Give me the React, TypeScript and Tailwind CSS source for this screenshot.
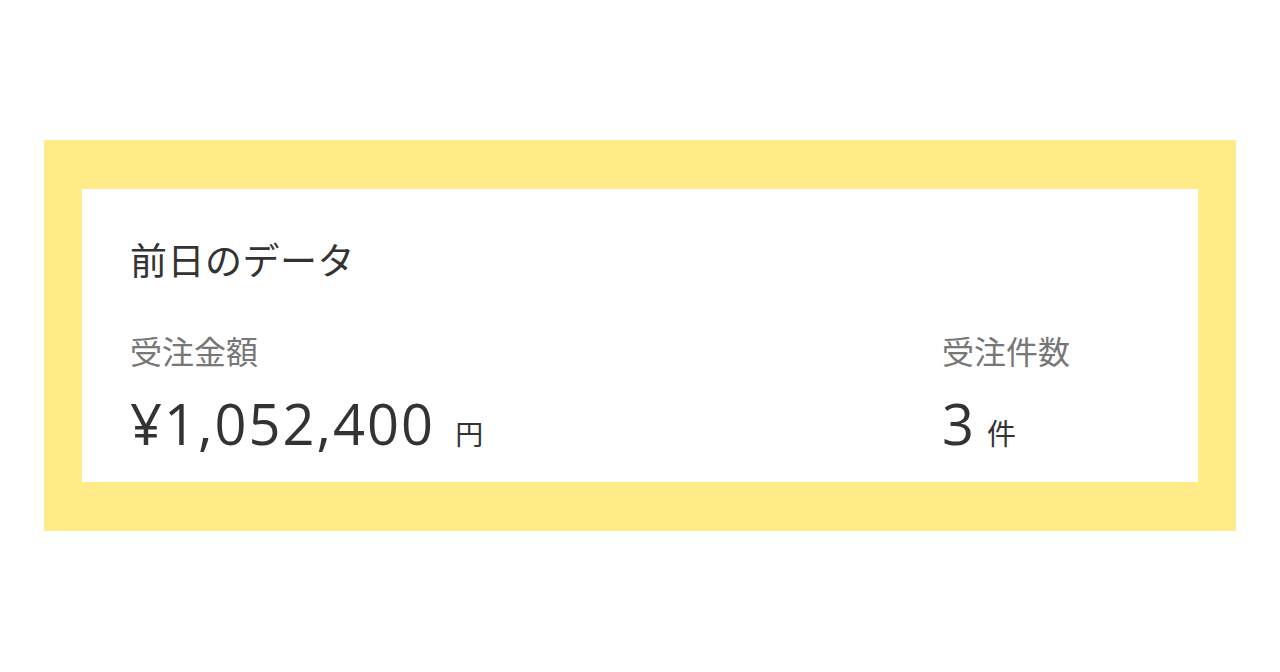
export default function App() {
  const jp = { fontFamily: '"Noto Sans CJK JP", "Noto Sans", sans-serif' };
  const num = { fontFamily: '"Open Sans", sans-serif' };
  return (
    <div className="w-[1280px] h-[672px] bg-white pt-[140px] px-[44px]" style={jp}>
      <div className="bg-[#ffeb88] px-[38px] py-[49px]">
        <div className="bg-white pl-[48px] pr-[48px] pt-[52px] pb-[31px]">
          <h2 className="text-[37px] leading-none tracking-[0.5px] text-[#333333] font-normal">前日のデータ</h2>
          <div className="flex justify-between mt-[56px]">
            <div>
              <div className="text-[32px] leading-[32px] text-[#777777]">受注金額</div>
              <div className="flex items-baseline mt-[29px]">
                <span className="text-[56px] leading-none tracking-[2px] text-[#333333]" style={num}>¥1,052,400</span>
                <span className="text-[28px] leading-none text-[#333333] ml-[20px]">円</span>
              </div>
            </div>
            <div className="w-[208px]">
              <div className="text-[32px] leading-[32px] text-[#777777]">受注件数</div>
              <div className="flex items-baseline mt-[29px]">
                <span className="text-[56px] leading-none text-[#333333]" style={num}>3</span>
                <span className="text-[29px] leading-none text-[#333333] ml-[13px]">件</span>
              </div>
            </div>
          </div>
        </div>
      </div>
    </div>
  );
}
